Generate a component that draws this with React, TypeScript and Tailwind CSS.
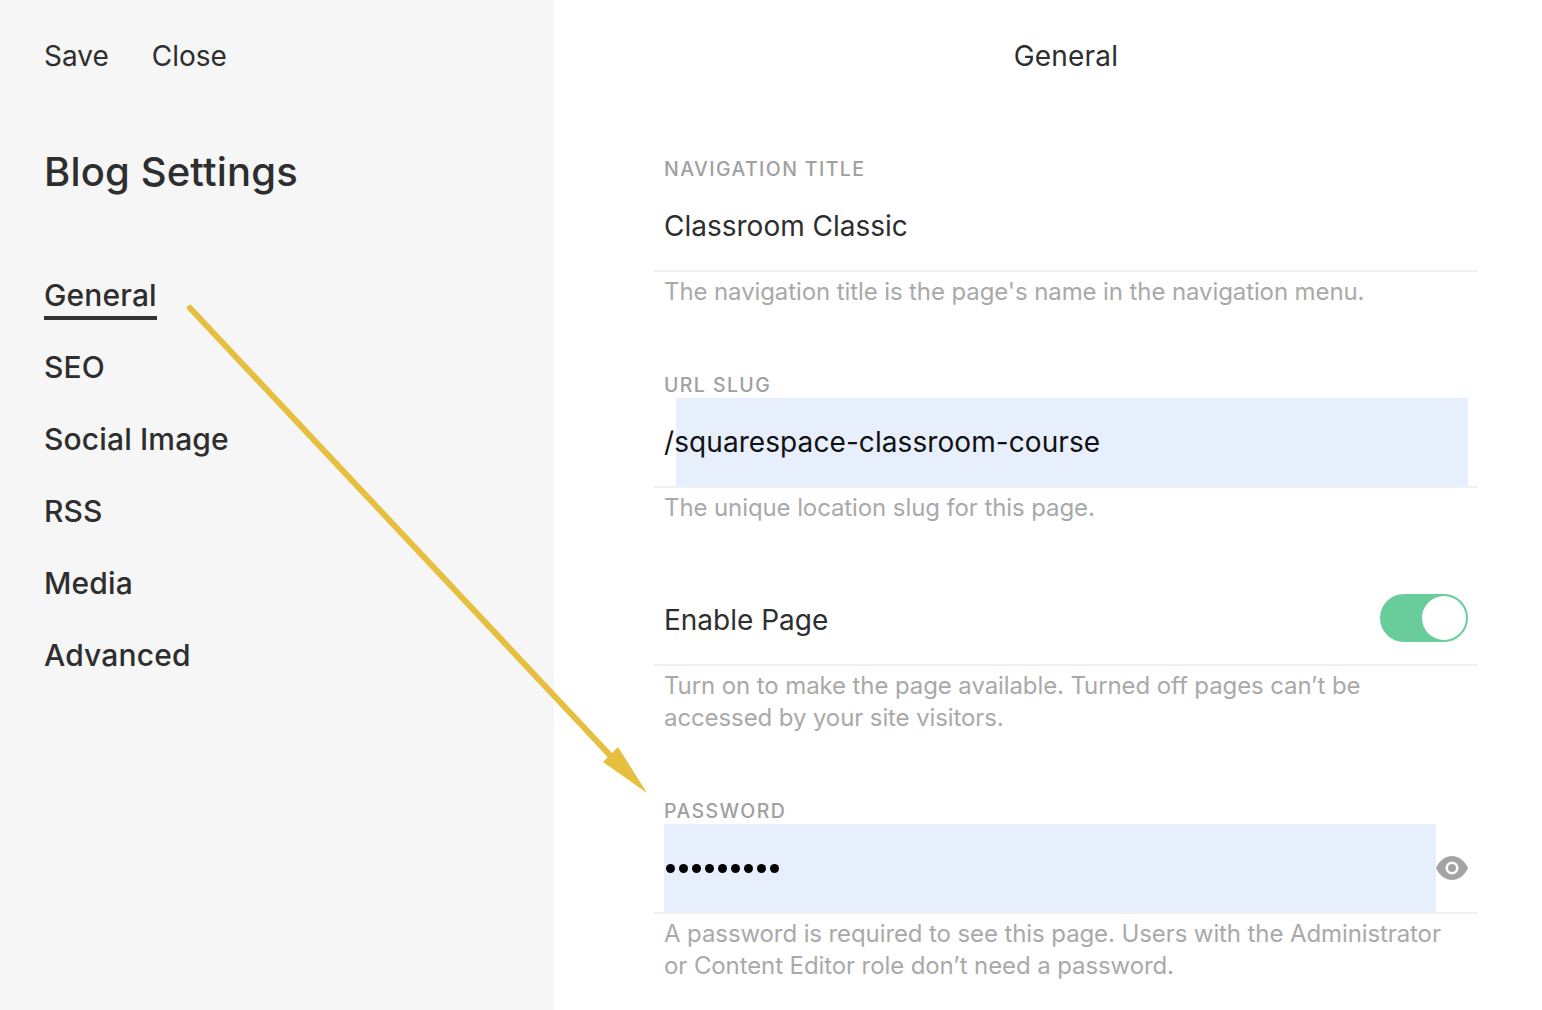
const NAV_ITEMS = ['General', 'SEO', 'Social Image', 'RSS', 'Media', 'Advanced'];

function Help({ children }: { children: React.ReactNode }) {
  return <p className="mt-1 px-[10px] text-[24px] leading-[32px] tracking-[-0.1px] text-[#a9a9a9]">{children}</p>;
}

function Label({ children }: { children: React.ReactNode }) {
  return (
    <div className="flex h-[26px] items-center px-[10px] pt-[2px] text-[19.5px] font-medium tracking-[1.4px] text-[#a0a0a0]">
      {children}
    </div>
  );
}

export default function App() {
  return (
    <div className="relative flex h-[1010px] w-[1542px] overflow-hidden bg-white font-['Inter',sans-serif] text-[#2e2e2e]">
      {/* sidebar */}
      <div className="w-[554px] shrink-0 bg-[#f6f6f6] pl-11">
        <div className="flex h-28 items-center gap-[43px] text-[28px]">
          <span>Save</span>
          <span>Close</span>
        </div>
        <h1 className="mt-[28px] h-[64px] text-[40px] leading-[64px] font-medium tracking-[0.15px]">Blog Settings</h1>
        <div className="mt-[67px] flex flex-col gap-[24px]">
          {NAV_ITEMS.map((item, index) => (
            <div key={item} className="flex h-12 items-center">
              <span
                className={`relative text-[30px] leading-[48px] font-medium tracking-[0.15px] ${
                  index === 0 ? "after:absolute after:inset-x-0 after:bottom-[-1px] after:h-1 after:bg-[#333] after:content-['']" : ''
                }`}
              >
                {item}
              </span>
            </div>
          ))}
        </div>
      </div>

      {/* content */}
      <div className="ml-[100px] w-[824px]">
        <div className="flex h-28 items-center justify-center text-[28px] tracking-[0.2px]">General</div>

        <div className="mt-11">
          <Label>NAVIGATION TITLE</Label>
          <div className="flex h-[90px] items-center border-b-2 border-[#f0f0f0] px-[10px] text-[28px]">
            Classroom Classic
          </div>
          <Help>The navigation title is the page's name in the navigation menu.</Help>
        </div>

        <div className="mt-16">
          <Label>URL SLUG</Label>
          <div className="h-[90px] border-b-2 border-[#f0f0f0] pl-[10px] pr-[10px]">
            <div className="relative h-[88px]">
              <div className="ml-3 h-full bg-[#e8effc]" />
              <div className="absolute inset-0 flex items-center text-[28px] tracking-[0.08px] text-[#111]">
                /squarespace-classroom-course
              </div>
            </div>
          </div>
          <Help>The unique location slug for this page.</Help>
        </div>

        <div className="mt-[52px]">
          <div className="flex h-[90px] items-center justify-between border-b-2 border-[#f0f0f0] px-[10px] text-[28px]">
            <span>Enable Page</span>
            <div className="mb-1 flex h-12 w-[88px] items-center justify-end rounded-full bg-[#68cd9a] p-[2px]">
              <div className="h-11 w-11 rounded-full bg-white" />
            </div>
          </div>
          <Help>
            Turn on to make the page available. Turned off pages can’t be
            <br />
            accessed by your site visitors.
          </Help>
        </div>

        <div className="mt-16">
          <Label>PASSWORD</Label>
          <div className="h-[90px] border-b-2 border-[#f0f0f0] pl-[10px] pr-[10px]">
            <div className="flex h-[88px] items-center">
              <div className="flex h-full w-[772px] items-center gap-1 bg-[#e8effc] pl-[2px]">
                {Array.from({ length: 9 }).map((_, index) => (
                  <span key={index} className="h-[9px] w-[9px] rounded-full bg-black" />
                ))}
              </div>
              <svg viewBox="0 0 32 24" className="h-6 w-8 text-[#a3a3a3]">
                <path
                  fill="currentColor"
                  fillRule="evenodd"
                  d="M0 12C3 5 9 0 16 0s13 5 16 12c-3 7-9 12-16 12S3 19 0 12Zm16 6.500a6.500 6.500 0 1 0 0-13 6.500 6.500 0 0 0 0 13Zm0-2.500a4 4 0 1 1 0-8 4 4 0 0 1 0 8Z"
                />
              </svg>
            </div>
          </div>
          <Help>
            A password is required to see this page. Users with the Administrator
            <br />
            or Content Editor role don’t need a password.
          </Help>
        </div>
      </div>

      {/* annotation arrow */}
      <svg className="pointer-events-none absolute inset-0" width="1542" height="1010" viewBox="0 0 1542 1010">
        <line x1="190" y1="308" x2="622" y2="768" stroke="#e6bf3f" strokeWidth="6" strokeLinecap="round" />
        <polygon points="647,793 603,762 618,747" fill="#e6bf3f" />
      </svg>
    </div>
  );
}
